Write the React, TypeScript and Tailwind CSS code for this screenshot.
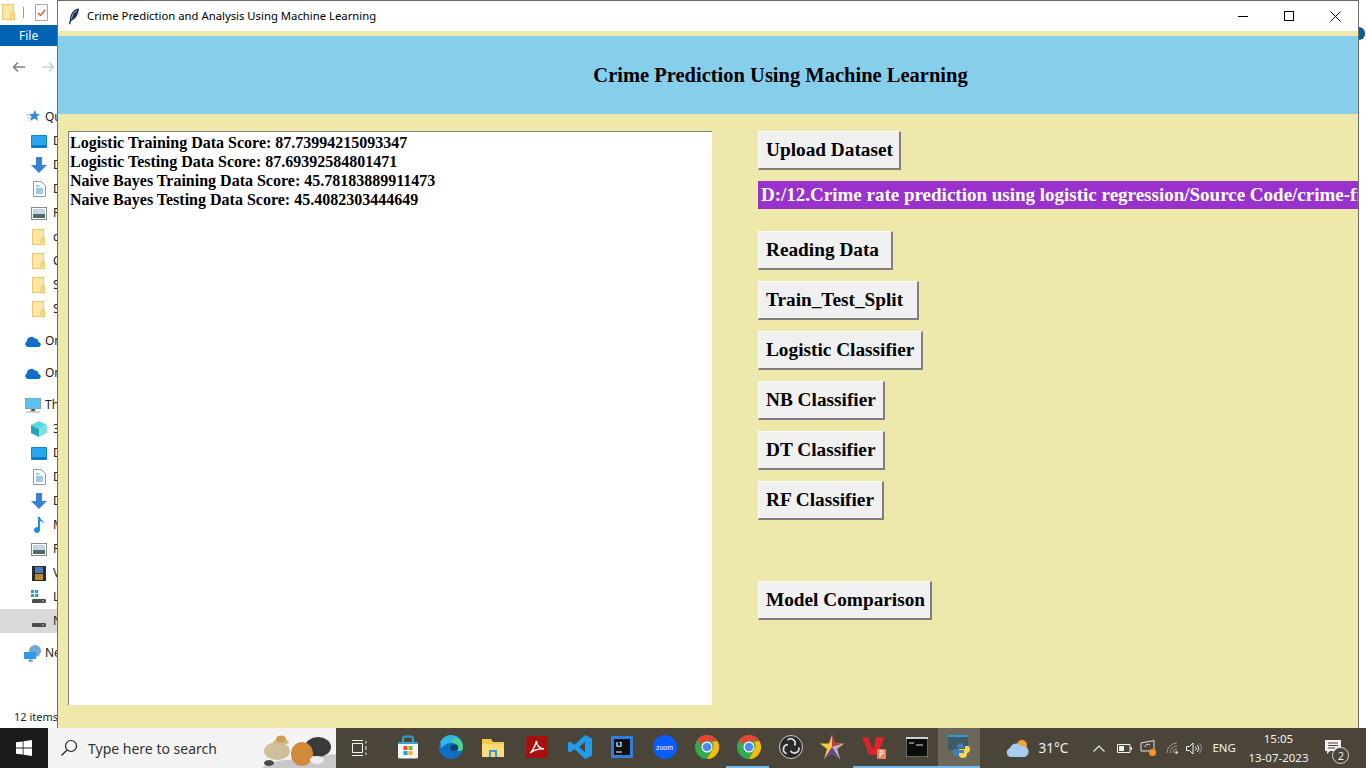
// App.tsx
import React from 'react';

const sans = 'font-["Noto_Sans",sans-serif]';
const serif = 'font-["Liberation_Serif",serif]';

const Folder = () => (
  <svg width="14" height="17" viewBox="0 0 14 17">
    <rect x="0.5" y="0.5" width="11" height="15" fill="#fde7a3" stroke="#ecca6c" />
    <path d="M9 9h3.500v7H9z" fill="#fbdd85" stroke="#ecca6c" />
  </svg>
);

const Monitor = () => (
  <svg width="16" height="13" viewBox="0 0 16 13">
    <rect width="16" height="13" rx="1" fill="#0a84d8" />
    <rect x="1" y="1" width="14" height="10" fill="#2aa6ee" />
    <path d="M1 11h14" stroke="#0b5c9c" />
  </svg>
);

const Down = () => (
  <svg width="16" height="16" viewBox="0 0 16 16">
    <path d="M5 0h6v8h5l-8 8-8-8h5z" fill="#3584d8" />
  </svg>
);

const Doc = () => (
  <svg width="13" height="16" viewBox="0 0 13 16">
    <path d="M.5.500h8l4 4v11H.5z" fill="#fff" stroke="#8a9aa8" />
    <path d="M3 5h3M3 8h7M3 10h7M3 12h7" stroke="#3f8fd6" />
  </svg>
);

const Pic = () => (
  <svg width="16" height="13" viewBox="0 0 16 13">
    <rect x=".5" y=".5" width="15" height="12" fill="#fff" stroke="#8b8b8b" />
    <rect x="2" y="2" width="12" height="5" fill="#c6d6e6" />
    <rect x="2" y="7" width="12" height="4" fill="#4f6b63" />
  </svg>
);

const Cloud = () => (
  <svg width="16" height="11" viewBox="0 0 16 11">
    <path d="M3 11a3 3 0 0 1-1-5.700A4.500 4.500 0 0 1 10 2.500 3.500 3.500 0 0 1 13.500 6 2.500 2.500 0 0 1 13 11z" fill="#0f6fc6" />
  </svg>
);

const ThisPc = () => (
  <svg width="16" height="15" viewBox="0 0 16 15">
    <rect x=".5" y=".5" width="15" height="10" fill="#5cc0f2" stroke="#7aa6c4" />
    <path d="M6 11h4v2H6zM1 14h14" stroke="#9aa6b0" />
  </svg>
);

const Cube = () => (
  <svg width="16" height="16" viewBox="0 0 16 16">
    <path d="M8 0l8 4-8 4-8-4z" fill="#5fd6df" />
    <path d="M0 4l8 4v8l-8-4z" fill="#1ea7b6" />
    <path d="M16 4l-8 4v8l8-4z" fill="#7fe0e0" />
  </svg>
);

const Music = () => (
  <svg width="12" height="16" viewBox="0 0 12 16">
    <path d="M5 0h2c0 3 4 3 4 7-1-2-2-2.500-4-3v9a3 3 0 1 1-2-2.800z" fill="#1d8ee6" />
  </svg>
);

const Film = () => (
  <svg width="14" height="15" viewBox="0 0 14 15">
    <rect width="14" height="15" fill="#2b2b2b" />
    <rect x="3" y="1" width="8" height="6" fill="#4d77b8" />
    <rect x="3" y="8" width="8" height="6" fill="#b78a2e" />
  </svg>
);

const Drive = ({ win }: { win?: boolean }) => (
  <svg width="16" height="14" viewBox="0 0 16 14">
    {win && <path d="M0 0h3v3H0zM4 0h3v3H4zM0 4h3v3H0zM4 4h3v3H4z" fill="#21a0e0" />}
    <rect x="1" y="9" width="14" height="4" rx="1" fill="#4a4f4c" />
    <path d="M11 11h2" stroke="#7fe07f" />
  </svg>
);

const Network = () => (
  <svg width="18" height="17" viewBox="0 0 18 17">
    <circle cx="11" cy="6" r="6" fill="#6ea7d8" />
    <rect x="0" y="7" width="12" height="7" fill="#2f9ae6" />
    <path d="M4 16h5M6.500 14v2" stroke="#2f7fbe" />
  </svg>
);

const Star = () => (
  <svg width="14" height="14" viewBox="0 0 14 14">
    <path d="M9 0l1.300 4H14l-3 2.500L12 11 8.500 8.500 4 11l1.500-4.500L3 4h4z" fill="#2f8fe0" />
    <path d="M0 5h3M1 8h3" stroke="#8cc4ef" />
  </svg>
);

const treeRows: { icon: React.ReactNode; label: string; top?: boolean; mt?: string; selected?: boolean }[] = [
  { icon: <Star />, label: 'Quick access', top: true },
  { icon: <Monitor />, label: 'Desktop' },
  { icon: <Down />, label: 'Downloads' },
  { icon: <Doc />, label: 'Documents' },
  { icon: <Pic />, label: 'Pictures' },
  { icon: <Folder />, label: 'code' },
  { icon: <Folder />, label: 'Crime' },
  { icon: <Folder />, label: 'Source' },
  { icon: <Folder />, label: 'Screens' },
  { icon: <Cloud />, label: 'OneDrive', top: true, mt: 'mt-2' },
  { icon: <Cloud />, label: 'OneDrive', top: true, mt: 'mt-2' },
  { icon: <ThisPc />, label: 'This PC', top: true, mt: 'mt-2' },
  { icon: <Cube />, label: '3D Objects' },
  { icon: <Monitor />, label: 'Desktop' },
  { icon: <Doc />, label: 'Documents' },
  { icon: <Down />, label: 'Downloads' },
  { icon: <Music />, label: 'Music' },
  { icon: <Pic />, label: 'Pictures' },
  { icon: <Film />, label: 'Videos' },
  { icon: <Drive win />, label: 'Local Disk' },
  { icon: <Drive />, label: 'New Volume', selected: true },
  { icon: <Network />, label: 'Network', top: true, mt: 'mt-2' },
];

function Explorer() {
  return (
    <div className={`w-[57px] shrink-0 flex flex-col overflow-hidden bg-white text-[12px] text-[#222] ${sans}`}>
      <div className="h-[25px] shrink-0 flex items-center pl-[2px]">
        <Folder />
        <div className="w-px h-[11px] bg-[#9a9a9a] ml-[7px] mr-[11px]" />
        <svg width="13" height="17" viewBox="0 0 13 17">
          <path d="M.5.500h12v16H.5z" fill="#fff" stroke="#a8a8a8" />
          <path d="M3 9l2.500 2.500L10 6" fill="none" stroke="#e0562a" strokeWidth="1.300" />
        </svg>
      </div>
      <div className="h-[21px] shrink-0 bg-[#0063b1] text-white flex items-center pl-[19px]">File</div>
      <div className="h-[41px] shrink-0 flex items-center pl-[12px] gap-[15px]">
        <svg width="14" height="12" viewBox="0 0 14 12" className="shrink-0">
          <path d="M13 6H1.500M6 1.500 1.500 6 6 10.500" fill="none" stroke="#7f7f7f" strokeWidth="1.600" />
        </svg>
        <svg width="14" height="12" viewBox="0 0 14 12" className="shrink-0">
          <path d="M1 6h11.500M8 1.500 12.500 6 8 10.500" fill="none" stroke="#cfcfcf" strokeWidth="1.600" />
        </svg>
      </div>
      <div className="flex flex-col pt-[18px]">
        {treeRows.map((row, i) => (
          <div
            key={i}
            className={`h-6 shrink-0 flex items-center whitespace-nowrap ${row.mt ?? ''} ${row.selected ? 'bg-[#d9d9d9]' : ''}`}
          >
            <div className={`shrink-0 flex justify-center ${row.top ? 'w-[45px] pl-[23px] pr-[2px]' : 'w-[53px] pl-[30px] pr-[5px]'}`}>
              {row.icon}
            </div>
            <span>{row.label}</span>
          </div>
        ))}
        <div className="mt-[44px] pl-[14px] whitespace-nowrap text-[11px]">12 items</div>
      </div>
    </div>
  );
}

function TkButton({ label, className = '' }: { label: string; className?: string }) {
  return (
    <button
      type="button"
      className={`h-[39px] self-start whitespace-nowrap bg-[#f0f0f0] border border-[#fff] border-r-[#7f7f7f] border-b-[#7f7f7f] border-r-2 border-b-2 text-left pl-[7px] text-[19.3px] font-bold text-black ${className}`}
    >
      {label}
    </button>
  );
}

function CrimeWindow() {
  return (
    <div className="w-[1302px] shrink-0 flex flex-col border-l border-t border-r border-[#6e6e6e] overflow-hidden bg-[#eee8aa]">
      <div className={`h-[30px] shrink-0 bg-white flex items-center ${sans}`}>
        <svg width="12" height="17" viewBox="0 0 12 17" className="ml-[10px] mr-[7px]">
          <path d="M11 .5C6 1 2.500 5 2 11l-1 5 1 .5 1.500-4C8 11 10.500 6 11 .5z" fill="#1f2f4f" />
          <path d="M9 2.500C6 4 4 7 3.500 11" stroke="#8fb0dc" fill="none" />
        </svg>
        <span className="text-[11.3px] text-black">Crime Prediction and Analysis Using Machine Learning</span>
        <div className="ml-auto flex h-full">
          <div className="w-[46px] flex items-center justify-center">
            <div className="w-[10px] h-px bg-black" />
          </div>
          <div className="w-[46px] flex items-center justify-center">
            <div className="w-[10px] h-[10px] border border-black" />
          </div>
          <div className="w-[46px] flex items-center justify-center">
            <svg width="11" height="11" viewBox="0 0 11 11">
              <path d="M.5.500l10 10M10.500.500l-10 10" stroke="#000" />
            </svg>
          </div>
        </div>
      </div>
      <div className="h-[5px] shrink-0" />
      <div className={`h-[78px] shrink-0 bg-[#87ceeb] flex items-center justify-center pl-[145px] text-[20.5px] font-bold text-black ${serif}`}>
        Crime Prediction Using Machine Learning
      </div>
      <div className={`flex flex-1 min-h-0 pt-[17px] pb-[23px] pl-[10px] ${serif}`}>
        <div className="w-[644px] shrink-0 bg-white border-l border-t border-[#808080] pl-[1px] pt-[1px] text-[16px] leading-[19px] font-bold text-black whitespace-nowrap">
          <div>Logistic Training Data Score: 87.73994215093347</div>
          <div>Logistic Testing Data Score: 87.69392584801471</div>
          <div>Naive Bayes Training Data Score: 45.78183889911473</div>
          <div>Naive Bayes Testing Data Score: 45.4082303444649</div>
        </div>
        <div className="flex flex-col min-w-0 flex-1 ml-[46px] overflow-hidden">
          <TkButton label="Upload Dataset" className="w-[143px]" />
          <div className="h-7 mt-[11px] shrink-0 bg-[#9932cc] text-white text-[19px] font-bold pl-[3px] leading-7 whitespace-nowrap">
            D:/12.Crime rate prediction using logistic regression/Source Code/crime-final.csv
          </div>
          <TkButton label="Reading Data" className="w-[135px] mt-[22px]" />
          <TkButton label="Train_Test_Split" className="w-[161px] mt-[11px]" />
          <TkButton label="Logistic Classifier" className="w-[165px] mt-[11px]" />
          <TkButton label="NB Classifier" className="w-[127px] mt-[11px]" />
          <TkButton label="DT Classifier" className="w-[127px] mt-[11px]" />
          <TkButton label="RF Classifier" className="w-[126px] mt-[11px]" />
          <TkButton label="Model Comparison" className="w-[174px] mt-[61px]" />
        </div>
      </div>
    </div>
  );
}

const Chrome = () => (
  <svg width="24" height="24" viewBox="0 0 24 24">
    <circle cx="12" cy="12" r="12" fill="#34a853" />
    <path d="M12 0a12 12 0 0 1 10.400 6H12a6 6 0 0 0-5.500 3.600L2.200 5A12 12 0 0 1 12 0z" fill="#ea4335" />
    <path d="M22.400 6A12 12 0 0 1 12 24l5.200-9A6 6 0 0 0 17 7z" fill="#fbbc05" />
    <circle cx="12" cy="12" r="5.500" fill="#fff" />
    <circle cx="12" cy="12" r="4.300" fill="#4a8cf0" />
  </svg>
);

const taskIcons: { icon: React.ReactNode; running?: boolean; active?: boolean; shift?: string }[] = [
  {
    icon: (
      <svg width="24" height="24" viewBox="0 0 24 24">
        <path d="M2 7h20v15a1.500 1.500 0 0 1-1.500 1.500h-17A1.500 1.500 0 0 1 2 22z" fill="#f4f4f4" />
        <path d="M7 7V3.500A2 2 0 0 1 9 1.500h6a2 2 0 0 1 2 2V7" fill="none" stroke="#33a5c9" strokeWidth="2" />
        <path d="M2 7h20v2H2z" fill="#33a5c9" />
        <rect x="7.500" y="11" width="4" height="4" fill="#e8502a" />
        <rect x="12.500" y="11" width="4" height="4" fill="#7cb82f" />
        <rect x="7.500" y="16" width="4" height="4" fill="#1f9fe0" />
        <rect x="12.500" y="16" width="4" height="4" fill="#f7b417" />
      </svg>
    ),
  },
  {
    icon: (
      <svg width="24" height="24" viewBox="0 0 24 24">
        <circle cx="12" cy="12" r="12" fill="#0c6fc4" />
        <path d="M1 8C3 3 7 0 12 0c7 0 12 5 12 12 0 2-1 4-3 4h-3c2-1 2-3 1-5-2-3-7-4-11-2-3 1-5 3-6 5-.5-2-.5-4 0-6z" fill="#2fb6e4" />
        <path d="M24 12c0 2-1 4-3 4h-3c2-1 2-3 1-5-1-2-3-3-5-3.500C12 5 15 3 18 3c3 1.500 6 5 6 9z" fill="#52d38a" />
        <path d="M11 13c0-2 2-3.500 4.500-3.500 2.500 0 4 1 3.500 3.500-.5 2-2.500 3-4.500 3S11 15 11 13z" fill="#173f63" />
      </svg>
    ),
  },
  {
    icon: (
      <svg width="24" height="22" viewBox="0 0 24 22">
        <path d="M1 3h9l2 3h11v15H1z" fill="#f5c94c" />
        <path d="M1 8h22v13H1z" fill="#fbdc7a" />
        <path d="M8 14h8v7H8z" fill="#3a9bdc" />
        <path d="M10 16h4v5h-4z" fill="#fbdc7a" />
      </svg>
    ),
  },
  {
    shift: 'pl-[4px]',
    icon: (
      <svg width="22" height="22" viewBox="0 0 22 22">
        <rect width="22" height="22" rx="3" fill="#a80f0f" />
        <path d="M4 17c3-2 5-7 6.500-12 0 4 2 7 7.500 8-4-.5-9 .500-14 4z" fill="none" stroke="#fff" strokeWidth="1.400" />
      </svg>
    ),
  },
  {
    shift: 'pl-[4px]',
    icon: (
      <svg width="24" height="24" viewBox="0 0 24 24">
        <path d="M17 0l7 3.500v17L17 24 6.500 14 2 17.500l-2-1.500V8l2-1.500L6.500 10zM17 6.500 11 12l6 5.500z" fill="#1f9cf0" />
      </svg>
    ),
  },
  {
    shift: 'pl-[4px]',
    icon: (
      <svg width="22" height="22" viewBox="0 0 22 22">
        <rect width="22" height="22" fill="#2f7fe0" />
        <rect x="3" y="3" width="16" height="16" fill="#111" />
        <text x="5" y="11" fontSize="7" fontWeight="700" fontFamily="Liberation Sans" fill="#fff">IJ</text>
        <path d="M5 16h6" stroke="#fff" />
      </svg>
    ),
  },
  {
    shift: 'pl-[4px]',
    icon: (
      <div className="w-6 h-6 rounded-full bg-[#0b5cff] flex items-center justify-center text-[7px] leading-none text-white font-['Liberation_Sans',sans-serif]">
        zoom
      </div>
    ),
  },
  { icon: <Chrome />, shift: 'pl-[4px]' },
  { icon: <Chrome />, running: true, shift: 'pl-[4px]' },
  {
    shift: 'pl-[2px]',
    icon: (
      <svg width="24" height="24" viewBox="0 0 24 24">
        <circle cx="12" cy="12" r="11.500" fill="#2a2a2a" stroke="#d0d0d0" />
        <g fill="none" stroke="#d8d8d8" strokeWidth="1.800">
          <path d="M8.500 5a4.500 4.500 0 0 1 7 5.500" />
          <path d="M8.500 5a4.500 4.500 0 0 1 7 5.500" transform="rotate(120 12 12)" />
          <path d="M8.500 5a4.500 4.500 0 0 1 7 5.500" transform="rotate(240 12 12)" />
        </g>
      </svg>
    ),
  },
  {
    icon: (
      <svg width="24" height="24" viewBox="0 0 24 24">
        <path d="M12 0l3 8.500h9l-7 5.500 3 10-8-6-8 6 3-10-7-5.500h9z" fill="#f6c944" />
        <path d="M12 0l3 8.500h9L12 12z" fill="#c0394b" />
        <path d="M24 8.500l-7 5.500 3 10-8-12z" fill="#b5b5c0" />
        <path d="M12 12l8 12-8-6-8 6z" fill="#6b3fa8" />
      </svg>
    ),
  },
  {
    icon: (
      <svg width="24" height="24" viewBox="0 0 24 24">
        <path d="M0 2h6l5 13 3-13h8l-6 18H7z" fill="#d8262c" />
        <rect x="15" y="14" width="9" height="10" rx="1" fill="#f0805a" />
        <path d="M18 22v-6h3v3h-3" fill="none" stroke="#fff" />
      </svg>
    ),
    running: true,
  },
  {
    icon: (
      <svg width="22" height="20" viewBox="0 0 22 20">
        <rect width="22" height="20" fill="#0c0c0c" stroke="#bdbdbd" />
        <path d="M0 0h22v2H0z" fill="#cfcfcf" />
        <path d="M3 6h5M10 8h7" stroke="#e0e0e0" />
      </svg>
    ),
    running: true,
  },
  {
    shift: 'pl-[2px]',
    icon: (
      <svg width="24" height="24" viewBox="0 0 24 24">
        <rect x="0" y="0" width="20" height="15" fill="#3d5a66" />
        <path d="M0 0h20v2H0z" fill="#2f9bd6" />
        <path d="M14 8c-3 0-5 1-5 3v2h6v1H7c-2 0-2 2-2 4s1 3 3 3h9c-1 0 0-10-3-13z" fill="#3d7fb8" />
        <path d="M22 14c0-2-1-3-3-3h-2v3h-6v1h5v3h-5v2c0 2 2 3 4 3s4-1 4-3v-2c2 0 3-2 3-4z" fill="#f5d652" />
      </svg>
    ),
    active: true,
    running: true,
  },
];

function Taskbar() {
  return (
    <div className={`h-10 shrink-0 flex bg-[#4a4538] text-[#f2f2f2] ${sans}`}>
      <div className="w-12 shrink-0 bg-[#1b1b1b] flex items-center justify-center">
        <svg width="16" height="16" viewBox="0 0 16 16">
          <path d="M0 2.300 6.700 1.400v6.200H0zM7.500 1.300 16 0v7.600H7.500zM0 8.400h6.700v6.200L0 13.700zM7.500 8.400H16V16l-8.500-1.200z" fill="#fff" />
        </svg>
      </div>
      <div className="w-[288px] shrink-0 bg-[#f3f3f3] flex items-center text-[#333] overflow-hidden">
        <svg width="18" height="18" viewBox="0 0 18 18" className="ml-[12px] mr-[10px] shrink-0">
          <circle cx="11" cy="7" r="5.500" fill="none" stroke="#222" strokeWidth="1.200" />
          <path d="M7 11 1.500 16.500" stroke="#222" strokeWidth="1.200" />
        </svg>
        <span className="text-[14px] whitespace-nowrap">Type here to search</span>
        <svg width="80" height="40" viewBox="0 0 80 40" className="ml-auto shrink-0">
          <path d="M6 40c5-5 12-7 24-8l50-6v14z" fill="#c9c9c9" />
          <ellipse cx="21" cy="23" rx="13" ry="9" fill="#cfc09a" />
          <ellipse cx="25" cy="14" rx="8" ry="3" fill="#cbbb8e" />
          <ellipse cx="25" cy="11" rx="5" ry="3.500" fill="#d49a50" />
          <ellipse cx="62" cy="19" rx="13" ry="10" fill="#3a3a3a" />
          <ellipse cx="46" cy="26" rx="11" ry="12" fill="#cf8b3a" />
          <ellipse cx="61" cy="32" rx="7" ry="4" fill="#ececec" />
          <ellipse cx="13" cy="35" rx="5" ry="3" fill="#4a4a4a" />
        </svg>
      </div>
      <div className="w-12 shrink-0 flex items-center justify-center">
        <svg width="16" height="16" viewBox="0 0 16 16">
          <path d="M0 .500h11M0 15.500h11M.5 3.500h10v9H.5zM14 1v2.500M14 6v4M14 12.500V15" fill="none" stroke="#f2f2f2" />
        </svg>
      </div>
      <div className="w-[3px] shrink-0" />
      {taskIcons.map((t, i) => (
        <div
          key={i}
          className={`w-[42.4px] shrink-0 flex items-center justify-center border-b-2 ${t.shift ?? ''} ${t.running ? 'border-[#76b9ed]' : 'border-transparent'} ${t.active ? 'bg-[#6b675a]' : ''}`}
        >
          {t.icon}
        </div>
      ))}
      <div className="flex-1 flex items-center min-w-0">
        <svg width="24" height="20" viewBox="0 0 24 20" className="ml-[26px] shrink-0">
          <circle cx="16" cy="7" r="5" fill="#f2a33a" />
          <path d="M5 19a4.500 4.500 0 0 1-1-8.800A6 6 0 0 1 15 8.500a5 5 0 0 1 4 10.500z" fill="#a8cdf0" />
        </svg>
        <span className="ml-[8px] text-[13.5px] w-[30px] whitespace-nowrap">31°C</span>
        <svg width="12" height="7" viewBox="0 0 12 7" className="ml-[25px] shrink-0">
          <path d="M.5 6.500 6 1l5.500 5.500" fill="none" stroke="#f2f2f2" strokeWidth="1.100" />
        </svg>
        <svg width="15" height="9" viewBox="0 0 15 9" className="ml-[12px] shrink-0">
          <path d="M.5.500h12.500v8H.5z" fill="none" stroke="#f2f2f2" />
          <rect x="2" y="2" width="5" height="5" fill="#f2f2f2" />
          <rect x="13.500" y="3" width="1.500" height="3" fill="#f2f2f2" />
        </svg>
        <svg width="17" height="17" viewBox="0 0 17 17" className="ml-[8px] shrink-0">
          <path d="M1 3 14 .500V11H1z" fill="none" stroke="#e8e8e8" />
          <path d="M5 7a3 3 0 0 1 5-2" fill="none" stroke="#e8e8e8" />
          <circle cx="12.500" cy="12.500" r="3.500" fill="#f7931e" />
        </svg>
        <svg width="14" height="12" viewBox="0 0 14 12" className="ml-[9px] shrink-0">
          <path d="M1 11a10 10 0 0 1 10-10M4 11a7 7 0 0 1 7-7M7 11a4 4 0 0 1 4-4" fill="none" stroke="#9a978c" />
          <circle cx="10.500" cy="10.500" r="1.300" fill="#f2f2f2" />
        </svg>
        <svg width="16" height="13" viewBox="0 0 16 13" className="ml-[6px] shrink-0">
          <path d="M.5 4.500h3L7 1v11L3.500 8.500h-3z" fill="none" stroke="#f2f2f2" />
          <path d="M9.500 4.500a3 3 0 0 1 0 4M11.500 3a5.500 5.500 0 0 1 0 7" fill="none" stroke="#f2f2f2" />
          <path d="M13.500 1.500a8 8 0 0 1 0 10" fill="none" stroke="#9a978c" />
        </svg>
        <span className="ml-[10px] w-[24px] text-[11.5px] whitespace-nowrap">ENG</span>
        <div className="ml-[11px] w-[62px] shrink-0 flex flex-col items-center text-[11.5px] leading-[19px] whitespace-nowrap">
          <span>15:05</span>
          <span>13-07-2023</span>
        </div>
        <div className="relative ml-[16px] mt-[8px] w-[24px] h-[24px] shrink-0">
          <svg width="16" height="15" viewBox="0 0 16 15">
            <path d="M0 0h16v11H5l-3 3v-3H0z" fill="#f2f2f2" />
            <path d="M3 3h10M3 5.500h10M3 8h7" stroke="#4a4538" />
          </svg>
          <div className="absolute left-[7px] top-[7px] w-[17px] h-[17px] rounded-full bg-[#4a4538] border border-[#d9d9d9] flex items-center justify-center text-[11px] leading-none">
            2
          </div>
        </div>
      </div>
    </div>
  );
}

export default function App() {
  return (
    <div className="w-[1366px] h-[768px] flex flex-col overflow-hidden bg-white">
      <div className="flex flex-1 min-h-0">
        <Explorer />
        <CrimeWindow />
        <div className="flex-1 bg-white relative">
          <div className="absolute left-0 top-[27px] w-[6px] h-[13px] rounded-r-full bg-[#0b5c9c]" />
        </div>
      </div>
      <Taskbar />
    </div>
  );
}
